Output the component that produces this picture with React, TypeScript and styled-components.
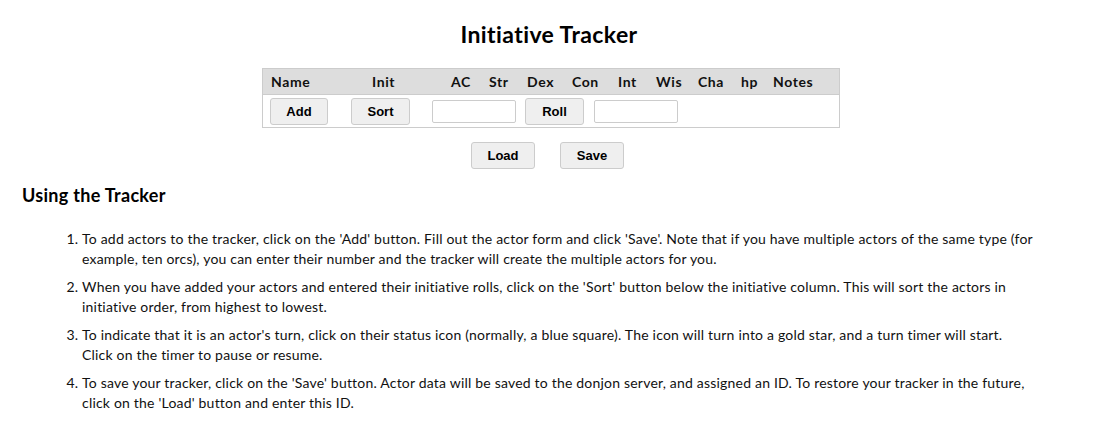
import styled, { createGlobalStyle } from 'styled-components';

const GlobalStyle = createGlobalStyle`
  html, body {
    margin: 0;
    padding: 0;
    background: #fff;
  }
  body {
    font-family: Lato, 'Open Sans', sans-serif;
    color: #111;
  }
`;

const Page = styled.div`
  padding: 0 22px;
`;

const Title = styled.h1`
  margin: 0;
  padding-top: 21px;
  text-align: center;
  font-size: 23px;
  font-weight: bold;
  letter-spacing: 0.4px;
  line-height: 26px;
  color: #000;
`;

const Tracker = styled.div`
  width: 576px;
  margin: 21px 0 0 calc(50% - 287px);
  border: 1px solid #ccc;
`;

const HeadRow = styled.div`
  display: grid;
  grid-template-columns: 101px 79px 38px 38px 45px 46px 38px 42px 43px 32px 1fr;
  height: 25px;
  align-items: center;
  padding-left: 8px;
  background: #ddd;
  border-bottom: 1px solid #ccc;
`;

const HeadCell = styled.div`
  font-size: 14px;
  font-weight: bold;
  letter-spacing: 0.6px;
  color: #111;
`;

const BodyRow = styled.div`
  display: grid;
  grid-template-columns: 81px 81px 93px 69px 1fr;
  height: 32px;
  align-items: center;
  padding-left: 7px;
`;

const Button = styled.button<{ $w: number }>`
  width: ${(p) => p.$w}px;
  height: 27px;
  padding: 0;
  border: 1px solid #ccc;
  border-radius: 3px;
  background: #efefef;
  font-family: 'Liberation Sans', Arial, sans-serif;
  font-size: 13px;
  font-weight: bold;
  color: #000;
`;

const Field = styled.input`
  width: 84px;
  height: 23px;
  box-sizing: border-box;
  border: 1px solid #ccc;
  border-radius: 2px;
  background: #fff;
`;

const Actions = styled.div`
  display: flex;
  justify-content: center;
  gap: 25px;
  margin-top: 14px;
  padding-right: 3px;
`;

const Heading = styled.h2`
  margin: 14px 0 0;
  font-size: 18px;
  font-weight: bold;
  letter-spacing: 0.3px;
  line-height: 24px;
  color: #000;
`;

const Steps = styled.ol`
  margin: 22px 0 0;
  padding: 0 41px 0 60px;
  font-size: 14px;
  letter-spacing: 0.2px;
  line-height: 20px;
  color: #111;
`;

const Step = styled.li`
  margin-bottom: 8px;
`;

const headers = ['Name', 'Init', 'AC', 'Str', 'Dex', 'Con', 'Int', 'Wis', 'Cha', 'hp', 'Notes'];

const steps = [
  "To add actors to the tracker, click on the 'Add' button. Fill out the actor form and click 'Save'. Note that if you have multiple actors of the same type (for example, ten orcs), you can enter their number and the tracker will create the multiple actors for you.",
  "When you have added your actors and entered their initiative rolls, click on the 'Sort' button below the initiative column. This will sort the actors in initiative order, from highest to lowest.",
  "To indicate that it is an actor's turn, click on their status icon (normally, a blue square). The icon will turn into a gold star, and a turn timer will start. Click on the timer to pause or resume.",
  "To save your tracker, click on the 'Save' button. Actor data will be saved to the donjon server, and assigned an ID. To restore your tracker in the future, click on the 'Load' button and enter this ID.",
];

export default function App() {
  return (
    <>
      <GlobalStyle />
      <Page>
        <Title>Initiative Tracker</Title>
        <Tracker>
          <HeadRow>
            {headers.map((h) => (
              <HeadCell key={h}>{h}</HeadCell>
            ))}
          </HeadRow>
          <BodyRow>
            <div><Button $w={58}>Add</Button></div>
            <div><Button $w={59}>Sort</Button></div>
            <div><Field /></div>
            <div><Button $w={59}>Roll</Button></div>
            <div><Field /></div>
          </BodyRow>
        </Tracker>
        <Actions>
          <Button $w={64}>Load</Button>
          <Button $w={64}>Save</Button>
        </Actions>
        <Heading>Using the Tracker</Heading>
        <Steps>
          {steps.map((s) => (
            <Step key={s}>{s}</Step>
          ))}
        </Steps>
      </Page>
    </>
  );
}
